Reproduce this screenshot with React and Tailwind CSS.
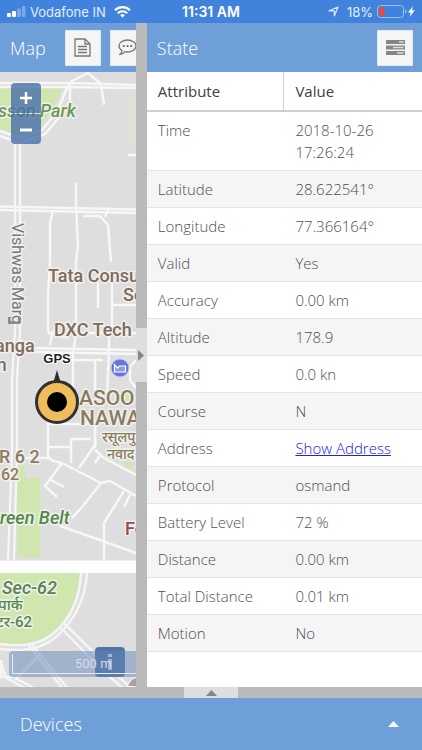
import React from "react";

const rows = [
  ["Time", "2018-10-26 17:26:24"],
  ["Latitude", "28.622541°"],
  ["Longitude", "77.366164°"],
  ["Valid", "Yes"],
  ["Accuracy", "0.00 km"],
  ["Altitude", "178.9"],
  ["Speed", "0.0 kn"],
  ["Course", "N"],
  ["Address", "Show Address"],
  ["Protocol", "osmand"],
  ["Battery Level", "72 %"],
  ["Distance", "0.00 km"],
  ["Total Distance", "0.01 km"],
  ["Motion", "No"],
];

function StatusBar() {
  return (
    <div className="grid h-[23px] shrink-0 grid-cols-[1fr_auto_1fr] items-center bg-[#4182dd] px-[7px] font-['Inter','Liberation_Sans',sans-serif] text-[13px] leading-4 text-[#e4effc]">
      <div className="flex items-center gap-1">
        <svg width="19" height="12" viewBox="0 0 19 12" fill="#fff" aria-hidden="true">
          <rect x="0" y="7" width="4" height="4" rx="1" />
          <rect x="5" y="5" width="4" height="6" rx="1" />
          <rect x="10" y="2.500" width="4" height="8.500" rx="1" opacity=".3" />
          <rect x="15" y="0" width="3.500" height="11" rx="1" opacity=".3" />
        </svg>
        <span>Vodafone IN</span>
        <svg className="ml-1" width="17" height="12" viewBox="0 0 17 12" fill="none" stroke="#fff" strokeWidth="2.200" aria-hidden="true">
          <path d="M1 4.300a10.600 10.600 0 0 1 15 0" />
          <path d="M3.800 7.200a6.600 6.600 0 0 1 9.400 0" />
          <path d="M8.500 11.500L6.200 9.200a3.300 3.300 0 0 1 4.600 0z" fill="#fff" stroke="none" />
        </svg>
      </div>
      <span className="text-sm font-semibold leading-4 text-white">11:31 AM</span>
      <div className="flex items-center justify-end">
        <svg className="mr-2" width="11" height="11" viewBox="0 0 11 11" fill="none" stroke="#dceafb" strokeWidth="1.200" strokeLinejoin="round" aria-hidden="true">
          <path d="M10 1L6.300 10V4.800H1z" />
        </svg>
        <span>18%</span>
        <svg className="ml-1" width="38" height="13" viewBox="0 0 38 13" aria-hidden="true">
          <rect x=".5" y=".5" width="26" height="12" rx="3" fill="none" stroke="#9bc0f1" />
          <path d="M28 4.500v4q1.600-.5 1.600-2t-1.600-2z" fill="#9bc0f1" />
          <rect x="2" y="2" width="5.500" height="9" rx="1.500" fill="#e04b46" />
          <path d="M36 1l-5 6.500h2.700L32.600 12l5.200-6.800h-2.900z" fill="#fff" />
        </svg>
      </div>
    </div>
  );
}

function ToolButton({ label, children }) {
  return (
    <button type="button" aria-label={label} className="flex size-9 shrink-0 items-center justify-center border border-[#e2e8ef] bg-[#f5f5f5]">
      {children}
    </button>
  );
}

function PanelHeader({ title, className, children }) {
  return (
    <header className={`flex h-[49px] shrink-0 items-center bg-[#6f9fd8] ${className}`}>
      <h2 className="shrink-0 text-lg font-light text-white">{title}</h2>
      {children}
    </header>
  );
}

function MapDrawing() {
  return (
    <svg className="absolute inset-0 h-full w-full" viewBox="0 72 136 615" preserveAspectRatio="xMinYMin slice" role="img" aria-label="Map">
      <rect y="72" width="400" height="800" fill="#dedede" />
      <path d="M124 92h12v56h-12zM84 314h22v16H84z" fill="#e0dfd9" />
      <path d="M0 88H62L54 108 40 126 20 135 0 129zM19 465L17 478V557H40V478H26L22 460z" fill="#cfe6ae" />
      <path d="M0 573H80C78 602 64 625 46 637 30 644 14 645 0 643z" fill="#cfe6ae" />
      <ellipse cx="127" cy="398" rx="3" ry="6" fill="#cfe6ae" />
      <path d="M123 462h12l-6 8z" fill="#cfe6ae" />

      <g fill="none" stroke="#f7f7f7" strokeWidth="2.500" strokeLinejoin="round">
        <path d="M0 83H68L136 85M0 87H66L136 88" />
        <path d="M0 131L20 138 42 130 57 112 66 90 72 81 88 73 101 84 104 105" />
        <path d="M0 136L20 143 45 134 62 114 70 102V86" />
        <path d="M15 142V330L12 380V450L8 560M20 142V330L17 380V450L14 560" strokeWidth="2.200" />
        <path d="M0 206.500L136 209.500M0 210L136 213" />
        <path d="M76 183V207L78 245 76 262V330M128 155h9M53 211L50 223V262L48 296V332M83 216H100L108 225 111 262M108 210L105 217M98 282V308M112 282V330M112 305H136" />
        <path d="M20 340L26 348 136 350M22 346L32 352 136 354" />
        <path d="M53 330L50 345M48 333L68 338M76 332L73 355V390M109 328V350L107 395M60 360H103M73 333H136" />
        <path d="M136 360L130 367V380L136 388M95 360V395M48 420V457L53 461 62 463M48 424H95V448M71 439V463M48 447H71M71 439H91" />
        <path d="M17 458H48M95 420V445L79 468M95 450L104 458 136 475M100 455L95 463" />
        <path d="M62 463L101 483 110 481 136 496M101 483L82 507 72 518M62 463L45 486 57 497M51 480L64 487M124 491L104 523V560M131 493L124 507" />
        <path d="M60 526L100 540 136 553" />
      </g>
      <path d="M0 560.500H136V573H0z" fill="#fff" />
      <g fill="none" stroke="#f5f5f5" strokeWidth="2.500">
        <path d="M81 573C80 600 70 619 54 633 36 648 15 646 0 644" />
        <path d="M87 573C85 603 73 622 56 637 38 652 16 651 0 649" />
        <path d="M60 627L102 670 125 690M64 623L106 665 133 690M32 645L69 690M28 645L64 690M40 655L15 680M0 660L6 678 29 690M15 678L34 688M0 677H14" />
        <path d="M0 660V678" strokeWidth="5" />
      </g>

      <g fontFamily="Roboto, sans-serif" stroke="#f0f0ee" strokeWidth="3" strokeLinejoin="round" paintOrder="stroke">
        <text x="-2" y="117" fontSize="18" fontStyle="italic" fontWeight="500" fill="#6a9a55">sson Park</text>
        <text transform="translate(12 223) rotate(90)" fontSize="16" fill="#777">Vishwas Marg</text>
        <g fill="#806a59" fontSize="18" fontWeight="500">
          <text x="48" y="282">Tata Consu</text>
          <text x="123" y="301">Se</text>
          <text x="54" y="336">DXC Tech</text>
          <text x="-5" y="352">anga</text>
          <text x="-9" y="371">m</text>
        </g>
        <g fill="#8a7c5d" fontWeight="500">
          <text x="79" y="405" fontSize="21">ASOO</text>
          <text x="80" y="425" fontSize="21">NAWA</text>
          <text x="102" y="442" fontSize="14" fontFamily="'Noto Sans Devanagari', 'Noto Sans', sans-serif">रसूलपु</text>
          <text x="107" y="459" fontSize="14" fontFamily="'Noto Sans Devanagari', 'Noto Sans', sans-serif">नवाद</text>
          <text x="-1" y="463" fontSize="18">R 6 2</text>
          <text x="1" y="480" fontSize="16">62</text>
        </g>
        <g fill="#508847" fontSize="18" fontStyle="italic" fontWeight="500">
          <text x="0" y="524">reen Belt</text>
          <text x="2" y="594">Sec-62</text>
        </g>
        <g fill="#508847" fontSize="15" fontWeight="500" fontFamily="Roboto, 'Noto Sans Devanagari', 'Noto Sans', sans-serif">
          <text x="-2" y="610">पार्क</text>
          <text x="-4" y="627">टर-62</text>
        </g>
        <text x="125" y="535" fontSize="18" fontWeight="500" fill="#8d4e4e">Fo</text>
      </g>

      <path d="M9 317v6h10v-7" fill="none" stroke="#8b8b8b" strokeWidth="2" />
      <circle cx="120" cy="368" r="9" fill="#6577dc" stroke="#c2c8ef" />
      <path d="M114.500 364.500v7.500h11v-6h-6l-2 2z" fill="#8d9ae6" stroke="#fff" strokeWidth="1.200" />
      <path d="M127 686l5-7 5-2v10z" fill="#a9a09a" stroke="#fff" />

      <path d="M53.500 382L57 370l3.500 12z" fill="#2d2d2d" />
      <circle cx="57" cy="402" r="20.500" fill="#f0bd5c" stroke="#303030" strokeWidth="3" />
      <circle cx="57" cy="402" r="10" fill="#000" />
      <text x="57" y="363" textAnchor="middle" fontFamily="'Liberation Sans', sans-serif" fontSize="13" fontWeight="700" fill="#222" stroke="#fff" strokeWidth="2" paintOrder="stroke">GPS</text>
    </svg>
  );
}

function MapPanel() {
  return (
    <section className="flex min-w-0 flex-1 flex-col overflow-hidden">
      <PanelHeader title="Map" className="gap-2 overflow-hidden pl-[10px]">
        <div className="ml-[11px] flex gap-[9px]">
          <ToolButton label="Reports">
            <svg width="17" height="19" viewBox="0 0 17 19" fill="none" stroke="#777" strokeWidth="1.300" aria-hidden="true">
              <path d="M1 1h10l5 5v12H1zM11 1v5h5" />
              <path d="M4 8.500h9M4 11.500h9M4 14.500h9" />
            </svg>
          </ToolButton>
          <ToolButton label="Events">
            <svg width="19" height="17" viewBox="0 0 19 17" fill="none" stroke="#777" strokeWidth="1.300" aria-hidden="true">
              <path d="M9.500 1C14.300 1 18 3.700 18 7s-3.700 6-8.500 6c-.9 0-1.700-.1-2.500-.3-1.200 1.600-2.700 2.500-4.800 2.600 1.200-1.100 1.800-2.300 1.800-3.700C2.200 10.500 1 8.900 1 7c0-3.300 3.700-6 8.500-6z" />
              <path d="M4.800 6.900h2M8.500 6.900h2M12.200 6.900h2" strokeWidth="2" />
            </svg>
          </ToolButton>
        </div>
      </PanelHeader>
      <div className="relative flex-1 overflow-hidden bg-[#dedede]">
        <MapDrawing />
        <div className="absolute left-[11px] top-[11px] flex flex-col gap-px text-white">
          <button type="button" aria-label="Zoom in" className="flex h-[30px] w-[30px] items-center justify-center rounded-t-sm bg-[#466fa9]/80">
            <svg width="12" height="12" viewBox="0 0 12 12" stroke="#fff" strokeWidth="2.500" aria-hidden="true"><path d="M0 6h12M6 0v12" /></svg>
          </button>
          <button type="button" aria-label="Zoom out" className="flex h-[30px] w-[30px] items-center justify-center rounded-b-sm bg-[#466fa9]/80">
            <svg width="12" height="12" viewBox="0 0 12 12" stroke="#fff" strokeWidth="3" aria-hidden="true"><path d="M0 7h12" /></svg>
          </button>
        </div>
        <button type="button" aria-label="Attributions" className="absolute bottom-[10px] right-[11px] flex h-[30px] w-[30px] items-center justify-center rounded-sm bg-[#41699f]/90">
          <svg width="4" height="16" viewBox="0 0 4 16" fill="#dfe7f3" aria-hidden="true"><path d="M0 0h4v3H0zM0 5h4v11H0z" /></svg>
        </button>
        <div className="pointer-events-none absolute bottom-[10px] left-[9px] w-[200px] rounded bg-[#6385b5]/50 p-[3px]">
          <div className="h-5 border-b border-l border-[#e7edf5] pl-[62px] font-['Roboto',sans-serif] text-[13px] leading-5 text-[#d5ddec]">500 m</div>
        </div>
      </div>
    </section>
  );
}

function StatePanel() {
  return (
    <section className="flex w-[65.200%] shrink-0 flex-col bg-white">
      <PanelHeader title="State" className="justify-between pl-[10px] pr-[9px]">
        <ToolButton label="Computed attributes">
          <svg width="19" height="15" viewBox="0 0 19 15" fill="#858585" aria-hidden="true">
            <rect width="19" height="4" rx=".5" /><rect y="5.500" width="19" height="4" rx=".5" /><rect y="11" width="19" height="4" rx=".5" />
            <path d="M13 1.200h4.500v1.600H13zM7 6.700h10.500v1.600H7zM11 12.200h6.500v1.600H11z" fill="#dedede" />
          </svg>
        </ToolButton>
      </PanelHeader>
      <table className="w-full table-fixed border-separate border-spacing-0 text-left text-[15px] leading-[22px]">
        <thead>
          <tr className="text-[#404040]">
            <th className="w-1/2 border-b-2 border-r border-[#cfcfcf] pb-2 pl-[11px] pt-2 font-normal">Attribute</th>
            <th className="w-1/2 border-b-2 border-[#cfcfcf] pb-2 pl-[11px] pt-2 font-normal">Value</th>
          </tr>
        </thead>
        <tbody className="font-light text-[#505050]">
          {rows.map(([name, value]) => (
            <tr key={name} className="align-top even:bg-[#f5f5f5]">
              <td className="border-b border-[#e4e4e4] py-[7px] pl-[11px]">{name}</td>
              <td className="border-b border-[#e4e4e4] py-[7px] pl-[11px] pr-6">
                {name === "Address" ? <a href="#address" className="text-[#2222dd] underline">{value}</a> : value}
              </td>
            </tr>
          ))}
        </tbody>
      </table>
    </section>
  );
}

export default function App() {
  return (
    <div className="flex h-screen min-h-[750px] flex-col overflow-hidden bg-white font-['Open_Sans',sans-serif]">
      <StatusBar />
      <main className="flex min-h-0 flex-1">
        <MapPanel />
        <div className="flex w-[11px] shrink-0 items-center bg-[#bababa]">
          <button type="button" aria-label="Collapse state" className="flex h-[54px] w-full items-center justify-center bg-[#dedede]">
            <svg width="6" height="11" viewBox="0 0 6 11" fill="#858585" aria-hidden="true"><path d="M0 0l6 5.500L0 11z" /></svg>
          </button>
        </div>
        <StatePanel />
      </main>
      <div className="flex h-[11px] shrink-0 justify-center bg-[#bababa]">
        <button type="button" aria-label="Expand devices" className="flex h-full w-[54px] items-center justify-center bg-[#dedede]">
          <svg width="11" height="6" viewBox="0 0 11 6" fill="#858585" aria-hidden="true"><path d="M0 6l5.500-6L11 6z" /></svg>
        </button>
      </div>
      <footer className="flex h-[52px] shrink-0 items-center justify-between bg-[#6f9fd8] pl-5 pr-[23px]">
        <h2 className="text-lg font-light text-white">Devices</h2>
        <button type="button" aria-label="Show devices">
          <svg width="11" height="6" viewBox="0 0 11 6" fill="#f4f8fd" aria-hidden="true"><path d="M0 6l5.500-6L11 6z" /></svg>
        </button>
      </footer>
    </div>
  );
}
